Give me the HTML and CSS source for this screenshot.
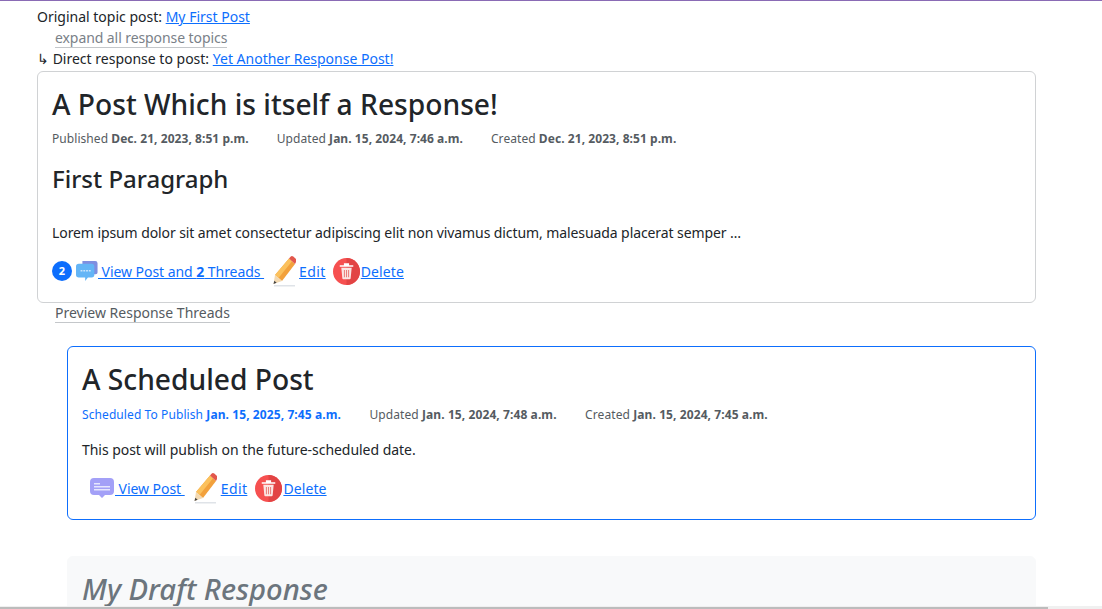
FILE: index.html
```html
<!DOCTYPE html>
<html lang="en">
<head>
<meta charset="utf-8">
<title>A Post Which is itself a Response!</title>
<link rel="stylesheet" href="styles.css">
</head>
<body>
<div class="page">
  <div class="crumb">Original topic post: <a href="#">My First Post</a></div>
  <div class="toggle muted"><span>expand all response topics</span></div>
  <div class="crumb">↳ Direct response to post: <a href="#">Yet Another Response Post!</a></div>

  <article class="card main">
    <h2>A Post Which is itself a Response!</h2>
    <div class="meta">
      <span>Published <b>Dec. 21, 2023, 8:51 p.m.</b></span>
      <span>Updated <b>Jan. 15, 2024, 7:46 a.m.</b></span>
      <span>Created <b>Dec. 21, 2023, 8:51 p.m.</b></span>
    </div>
    <h3>First Paragraph</h3>
    <p class="body-first">Lorem ipsum dolor sit amet consectetur adipiscing elit non vivamus dictum, malesuada placerat semper …</p>
    <div class="actions">
      <span class="badge">2</span>
      <svg class="ic chats" viewBox="0 0 24 24" aria-hidden="true">
        <path d="M7 1h14a2.500 2.500 0 0 1 2.500 2.500v10a2 2 0 0 1-2 2H7z" fill="#7f8fe0"/>
        <path d="M3 4h14a3 3 0 0 1 3 3v9a3 3 0 0 1-3 3h-4l-3 4v-4H3a3 3 0 0 1-3-3V7a3 3 0 0 1 3-3z" fill="#64b5f6"/>
        <g fill="#d5eafc"><rect x="5" y="11" width="2" height="1.500"/><rect x="8" y="11" width="2" height="1.500"/><rect x="11" y="11" width="2" height="1.500"/><rect x="14" y="11" width="2" height="1.500"/></g>
      </svg>
      <a href="#" class="view"> View Post and <b>2</b> Threads </a>
      <svg class="ic pencil" viewBox="0 0 24 32" aria-hidden="true">
        <rect x="2" y="30" width="21" height="1.500" fill="#dfe3e8"/>
        <path d="M3 20 17 3.500l6 5.500L10 26z" fill="#f2a13c"/>
        <path d="M3 20 17 3.500l3 2.700L6.500 23z" fill="#fbc15d"/>
        <path d="M17 3.500l1.500-1.800a2 2 0 0 1 2.800-.2l2.700 2.400a2 2 0 0 1 .2 2.800L23 9z" fill="#e2574c"/>
        <path d="M3 20l7 6-8.500 3z" fill="#f3d9b1"/>
        <path d="M2.300 25.700l2.300 2-3.100 1.300z" fill="#444"/>
      </svg>
      <a href="#" class="edit">Edit</a>
      <svg class="ic trash" viewBox="0 0 26 26" aria-hidden="true">
        <circle cx="13" cy="13" r="13" fill="#f65050"/>
        <path d="M13 0a13 13 0 0 1 0 26z" fill="#e24444"/>
        <path d="M8 9.500h10l-1 10a1 1 0 0 1-1 1h-6a1 1 0 0 1-1-1z" fill="#fbe6e4"/>
        <path d="M6.500 7h13v1.500h-13zM10.500 5h5v2h-5z" fill="#fff"/>
        <path d="M10.500 11.500h1v7h-1zM12.500 11.500h1v7h-1zM14.500 11.500h1v7h-1z" fill="#e9807c"/>
      </svg>
      <a href="#" class="del">Delete</a>
    </div>
  </article>
  <div class="toggle after"><span>Preview Response Threads</span></div>

  <div class="threads">
    <article class="card scheduled">
      <h2>A Scheduled Post</h2>
      <div class="meta">
        <span class="sched">Scheduled To Publish <b>Jan. 15, 2025, 7:45 a.m.</b></span>
        <span>Updated <b>Jan. 15, 2024, 7:48 a.m.</b></span>
        <span>Created <b>Jan. 15, 2024, 7:45 a.m.</b></span>
      </div>
      <p class="body-sched">This post will publish on the future-scheduled date.</p>
      <div class="actions sub">
        <svg class="ic single" viewBox="0 0 26 22" aria-hidden="true">
          <path d="M5 1h16a4 4 0 0 1 4 4v9a4 4 0 0 1-4 4h-5l-3 3-3-3H5a4 4 0 0 1-4-4V5a4 4 0 0 1 4-4z" fill="#a3a0f7"/>
          <g fill="#e6e6fd"><rect x="5" y="6" width="6" height="1.500"/><rect x="5" y="9" width="16" height="1.500"/><rect x="5" y="12" width="16" height="1.500"/></g>
        </svg>
        <a href="#" class="view"> View Post </a>
        <svg class="ic pencil" viewBox="0 0 24 32" aria-hidden="true">
          <rect x="2" y="30" width="21" height="1.500" fill="#dfe3e8"/>
          <path d="M3 20 17 3.500l6 5.500L10 26z" fill="#f2a13c"/>
          <path d="M3 20 17 3.500l3 2.700L6.500 23z" fill="#fbc15d"/>
          <path d="M17 3.500l1.500-1.800a2 2 0 0 1 2.800-.2l2.700 2.400a2 2 0 0 1 .2 2.800L23 9z" fill="#e2574c"/>
          <path d="M3 20l7 6-8.500 3z" fill="#f3d9b1"/>
          <path d="M2.300 25.700l2.300 2-3.100 1.300z" fill="#444"/>
        </svg>
        <a href="#" class="edit">Edit</a>
        <svg class="ic trash" viewBox="0 0 26 26" aria-hidden="true">
          <circle cx="13" cy="13" r="13" fill="#f65050"/>
          <path d="M13 0a13 13 0 0 1 0 26z" fill="#e24444"/>
          <path d="M8 9.500h10l-1 10a1 1 0 0 1-1 1h-6a1 1 0 0 1-1-1z" fill="#fbe6e4"/>
          <path d="M6.500 7h13v1.500h-13zM10.500 5h5v2h-5z" fill="#fff"/>
          <path d="M10.500 11.500h1v7h-1zM12.500 11.500h1v7h-1zM14.500 11.500h1v7h-1z" fill="#e9807c"/>
        </svg>
        <a href="#" class="del">Delete</a>
      </div>
    </article>
    <article class="card draft">
      <h2>My Draft Response</h2>
    </article>
  </div>
</div>
<div class="scrollbar"><div class="thumb"></div></div>
</body>
</html>
```
FILE: styles.css
```css
html, body {
  margin: 0;
  padding: 0;
  height: 100%;
  overflow: hidden;
  background: #fff;
}
body {
  font-family: "Noto Sans", "Open Sans", sans-serif;
  font-size: 14px;
  line-height: 21px;
  color: #212529;
  border-top: 1px solid #8a6bb5;
  box-sizing: border-box;
}
a { color: #0d6efd; text-decoration: underline; }
.page {
  padding: 5px 66px 0 37px;
}
.crumb { height: 21px; }
.toggle {
  padding-left: 18px;
  height: 21px;
  color: #555b61;
}
.toggle span { border-bottom: 1px solid #c4c7ca; }
.toggle.muted { color: #7a8188; letter-spacing: -0.08px; }
.toggle.after { height: 20px; line-height: 20px; }
.card {
  border: 1px solid #d0d2d4;
  border-radius: 6px;
  padding: 14px;
  box-sizing: border-box;
}
.main { height: 232px; margin-top: 2px; }
h2 {
  margin: 0;
  font-size: 28.2px;
  line-height: 36px;
  font-weight: 500;
  color: #212529;
}
h3 {
  margin: 16px 0 0;
  font-size: 24px;
  line-height: 30px;
  font-weight: 500;
}
.meta {
  display: flex;
  gap: 28px;
  margin-top: 8px;
  font-size: 12px;
  line-height: 18px;
  color: #555b61;
  letter-spacing: 0.06px;
}
.scheduled .meta {
  gap: 28.5px;
  margin-top: 9px;
  letter-spacing: 0.09px;
}
.meta b { font-weight: 700; }
.sched { color: #0d6efd; }
.body-first { margin: 28px 0 0; letter-spacing: -0.09px; }
.body-sched { margin: 15px 0 0; letter-spacing: -0.04px; }
.actions {
  display: flex;
  align-items: center;
  margin-top: 11px;
  height: 34px;
  white-space: pre;
}
.actions.sub { padding-left: 7px; }
.view { letter-spacing: -0.05px; }
.edit { letter-spacing: 0.4px; }
.del { letter-spacing: 0.1px; }
.badge {
  width: 20px;
  height: 20px;
  border-radius: 50%;
  background: #0d6efd;
  color: #fff;
  font-size: 11px;
  font-weight: 700;
  line-height: 20px;
  text-align: center;
  margin-right: 4px;
}
.ic { flex: none; display: block; }
.chats { width: 22px; height: 22px; }
.single { width: 26px; height: 22px; }
.pencil { width: 24px; height: 32px; margin-left: 8px; margin-right: 3px; }
.sub .pencil { margin-right: 4px; }
.trash { width: 27px; height: 27px; margin-left: 7px; margin-right: 1px; }
.sub .trash { margin-left: 8px; }
.threads { padding: 23px 0 0 30px; }
.scheduled { border-color: #0d6efd; height: 174px; }
.draft {
  margin-top: 36px;
  border-color: #f8f9fa;
  background: #f8f9fa;
  height: 120px;
}
.draft h2 { font-style: italic; color: #6c757d; font-size: 29.2px; }
.scrollbar {
  position: fixed;
  left: 0;
  right: 0;
  bottom: 0;
  height: 3px;
  background: #f0f0f0;
}
.thumb {
  width: 1048px;
  height: 2px;
  margin-top: 1px;
  background: #bcbcbc;
}
```
